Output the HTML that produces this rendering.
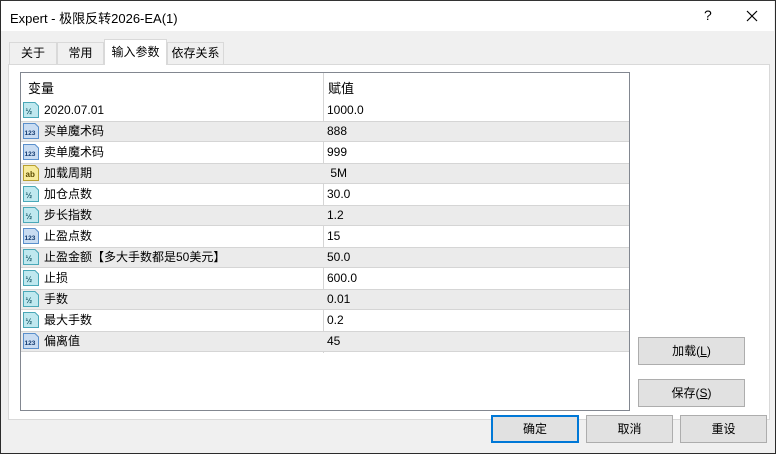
<!DOCTYPE html>
<html><head><meta charset="utf-8"><style>
*{margin:0;padding:0;box-sizing:border-box}
body{width:776px;height:454px;background:#f0f0f0;font-family:"Liberation Sans","Noto Sans CJK SC",sans-serif;font-size:12px;color:#000;position:relative;overflow:hidden}
.win{position:absolute;left:0;top:0;width:776px;height:454px;border:1px solid #2b2b2b;border-top-color:#333}
.title{position:absolute;left:1px;top:1px;width:773px;height:30px;background:#fff}
.title .t{position:absolute;left:9px;top:7px;font-size:13px}
.abs{position:absolute}
.tab{position:absolute;top:42px;height:22px;border:1px solid #d9d9d9;border-bottom:none;background:#f0f0f0;font-size:12px;text-align:center;line-height:20px}
.tab.sel{top:39px;height:26px;background:#fff;z-index:2;line-height:24px}
.panel{position:absolute;left:8px;top:64px;width:762px;height:356px;background:#fff;border:1px solid #d9d9d9}
.list{position:absolute;left:20px;top:72px;width:610px;height:339px;border:1px solid #828790;background:#fff;overflow:hidden}
.row{position:absolute;left:0;width:608px;height:21px;line-height:20px}
.row.g{background:#ebebeb;border-top:1px solid #d5d5d5;border-bottom:1px solid #d5d5d5;line-height:18px}
.row .n{position:absolute;left:23px}
.row .v{position:absolute;left:306px;white-space:pre}
.row svg{position:absolute;left:2px;top:2px}
.row.g svg{top:1px}
.vline{position:absolute;left:302px;top:0;width:1px;height:280px;background:#d5d5d5}
.btn{position:absolute;width:107px;height:28px;background:#e1e1e1;border:1px solid #adadad;text-align:center;line-height:26px;font-size:12px}
</style></head><body>
<div class="win"></div>
<div class="title"><span class="t">Expert - 极限反转2026-EA(1)</span>
<span class="abs" style="left:703px;top:6px;font-size:14px">?</span>
<svg class="abs" style="left:745px;top:9px" width="12" height="12"><path d="M1 1L11 11M11 1L1 11" stroke="#000" stroke-width="1.2"/></svg>
</div>
<div class="tab" style="left:9px;width:48px">关于</div>
<div class="tab" style="left:57px;width:47px">常用</div>
<div class="tab sel" style="left:104px;width:63px">输入参数</div>
<div class="tab" style="left:167px;width:57px">依存关系</div>
<div class="panel"></div>
<div class="list">
<div class="vline"></div>
<div class="abs" style="left:7px;top:5px;font-size:13px">变量</div>
<div class="abs" style="left:307px;top:5px;font-size:13px">赋值</div>
<div id="rows"></div>
</div>
<div class="btn" style="left:638px;top:337px">加载(<u>L</u>)</div>
<div class="btn" style="left:638px;top:379px">保存(<u>S</u>)</div>
<div class="btn" style="left:491px;top:415px;width:88px;border:2px solid #0078d7;line-height:24px">确定</div>
<div class="btn" style="left:586px;top:415px;width:87px">取消</div>
<div class="btn" style="left:680px;top:415px;width:87px">重设</div>
<script>
var d=[["v","2020.07.01","1000.0"],["i","买单魔术码","888"],["i","卖单魔术码","999"],["a","加载周期"," 5M"],["v","加仓点数","30.0"],["v","步长指数","1.2"],["i","止盈点数","15"],["v","止盈金额【多大手数都是50美元】","50.0"],["v","止损","600.0"],["v","手数","0.01"],["v","最大手数","0.2"],["i","偏离值","45"]];
var ic={v:['#bfe8ef','#4aa8b8','½','#1a5a6a'],i:['#c9dcf2','#5a8fcc','123','#123a70'],a:['#f7eb9c','#b8a030','ab','#5a4a00']};
var h='';
d.forEach(function(r,i){var c=ic[r[0]];
h+='<div class="row'+(i%2?' g':'')+'" style="top:'+(27+21*i)+'px"><svg width="16" height="16"><path d="M0.5 0.5H12L15.5 4V15.5H0.5Z" fill="'+c[0]+'" stroke="'+c[1]+'"/><text x="'+(r[0]=='i'?1.5:2.5)+'" y="12" font-size="'+(r[0]=='i'?6.5:8)+'" font-family="Liberation Sans" font-weight="bold" fill="'+c[3]+'">'+c[2]+'</text></svg><span class="n">'+r[1]+'</span><span class="v">'+r[2]+'</span></div>';});
document.getElementById('rows').innerHTML=h;
</script>
</body></html>
